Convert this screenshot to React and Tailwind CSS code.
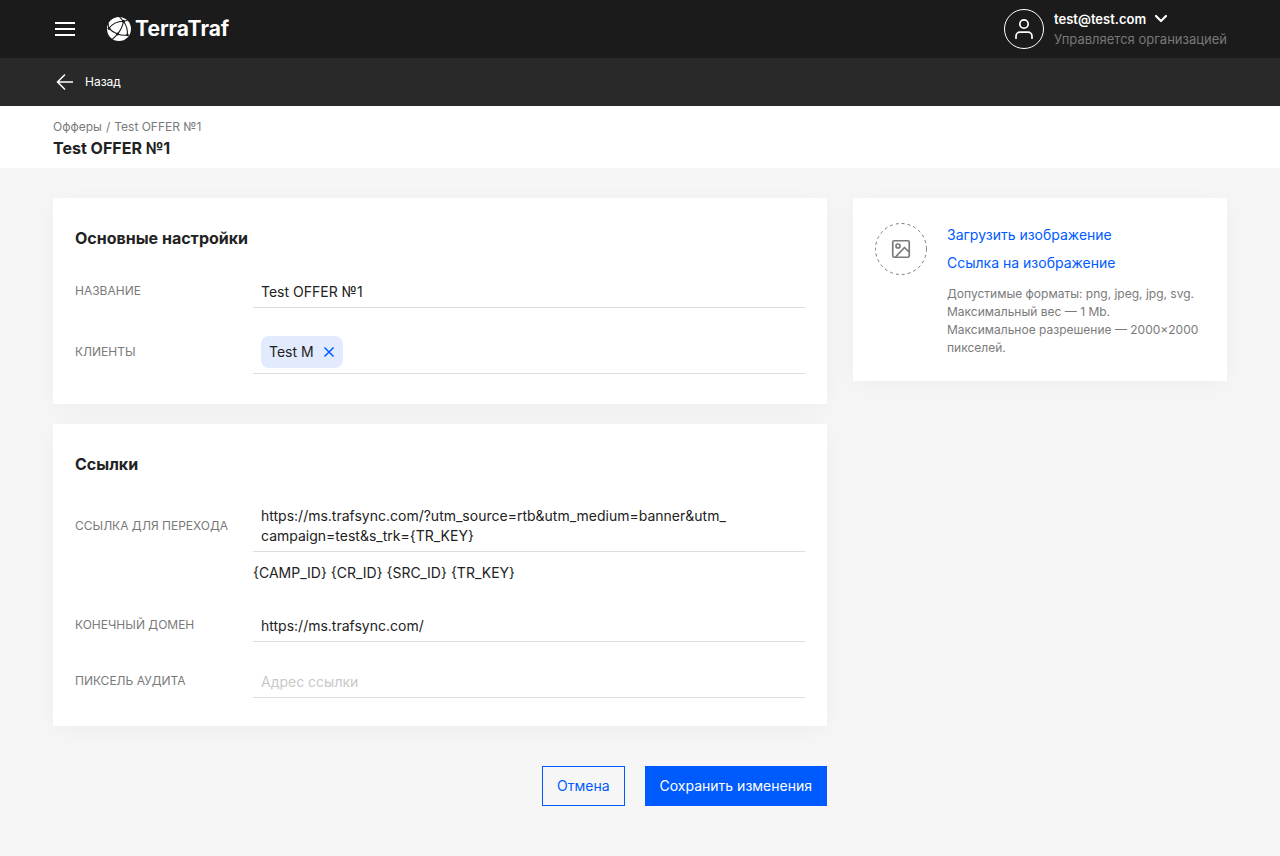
import { useState } from 'react';

const LINK_MACROS = ['{CAMP_ID}', '{CR_ID}', '{SRC_ID}', '{TR_KEY}'];

const DEFAULT_FORM = {
  name: 'Test OFFER №1',
  link: 'https://ms.trafsync.com/?utm_source=rtb&utm_medium=banner&utm_\ncampaign=test&s_trk={TR_KEY}',
  domain: 'https://ms.trafsync.com/',
  pixel: '',
};

const inputClass =
  'block w-full h-8 px-2 pb-px border-b border-[#dedede] bg-transparent text-sm text-[#222222] placeholder:text-[#c8c8c8] outline-none';

function Logo() {
  return (
    <a href="#" className="flex items-center gap-1 text-white">
      <svg width="24" height="24" viewBox="0 0 24 24" aria-hidden="true">
        <circle cx="12" cy="12" r="12" fill="currentColor" />
        <g fill="none" stroke="#1b1b1b" strokeWidth="1.100">
          <path d="M2 11.500C5 7 10 4.400 16.500 4.300" />
          <path d="M2 11.500C4.500 14 7 15.700 10.500 17" />
          <path d="M16.500 4.300C15.500 9.500 13.500 13.500 10.500 17" />
          <path d="M16.500 4.300C19.500 8.500 20.700 13 20.500 18" />
          <path d="M10.500 17C14 18.300 17 18.500 20.500 18" />
          <path d="M10.500 17C9 19 7.500 20.500 5.500 22" />
          <path d="M16.500 4.300L12.500 0" />
          <path d="M16.500 4.300L20.500 3.500" />
          <path d="M2 11.500L1 6" />
        </g>
        <g fill="#1b1b1b">
          <circle cx="16.500" cy="4.300" r="1.500" />
          <circle cx="2" cy="11.500" r="1.400" />
          <circle cx="10.500" cy="17" r="1.500" />
          <circle cx="20.500" cy="18" r="1.300" />
        </g>
      </svg>
      <span className="text-[21px] leading-7 font-bold">TerraTraf</span>
    </a>
  );
}

function Header() {
  return (
    <header className="flex items-center justify-between h-[58px] px-[53px] bg-[#1b1b1b]">
      <div className="flex items-center gap-[30px]">
        <button type="button" aria-label="Меню" className="text-white">
          <svg width="24" height="24" viewBox="0 0 24 24" fill="none" stroke="currentColor" strokeWidth="2">
            <path d="M2 6h20M2 12h20M2 18h20" />
          </svg>
        </button>
        <Logo />
      </div>

      <button type="button" className="flex items-center gap-[10px] text-left">
        <svg width="40" height="40" viewBox="0 0 40 40" fill="none" stroke="#ffffff" aria-hidden="true">
          <circle cx="20" cy="20" r="19.500" />
          <g strokeWidth="1.700" strokeLinecap="round">
            <circle cx="20" cy="15" r="4.200" />
            <path d="M12 29.200v-2a4 4 0 0 1 4-4h8a4 4 0 0 1 4 4v2" />
          </g>
        </svg>
        <span className="block pb-px">
          <span className="flex items-center gap-2 text-[13px] leading-5 font-semibold text-white">
            test@test.com
            <svg width="14" height="9" viewBox="0 0 14 9" fill="none" stroke="currentColor" strokeWidth="2.200" strokeLinecap="round" strokeLinejoin="round">
              <path d="M2 2l5 5 5-5" />
            </svg>
          </span>
          <span className="block text-[13px] leading-5 text-[#787878]">Управляется организацией</span>
        </span>
      </button>
    </header>
  );
}

function Card({ title, className = '', children }) {
  return (
    <section className={`px-[22px] pt-7 bg-white shadow-[0_4px_24px_rgba(0,0,0,0.04)] ${className}`}>
      <h2 className="mb-[26px] text-base leading-6 font-bold text-[#222222]">{title}</h2>
      <div className="flex flex-col gap-6">{children}</div>
    </section>
  );
}

function Field({ id, label, hint, children }) {
  return (
    <div className="grid grid-cols-[178px_minmax(0,1fr)] items-center">
      <label htmlFor={id} className="pb-[3px] text-xs leading-4 uppercase text-[#7a7a7a]">
        {label}
      </label>
      {children}
      {hint && <p className="col-start-2 pt-3 pb-1 text-sm leading-[18px] text-[#222222]">{hint}</p>}
    </div>
  );
}

export default function App() {
  const [form, setForm] = useState(DEFAULT_FORM);
  const [clients, setClients] = useState(['Test M']);

  function update(key) {
    return (e) => setForm({ ...form, [key]: e.target.value });
  }

  return (
    <div className="min-h-screen bg-[#f6f6f6] font-[Inter,sans-serif]">
      <Header />

      <nav className="flex items-center h-12 px-[53px] bg-[#292929]">
        <a href="#" className="flex items-center gap-2 text-xs text-white">
          <svg width="24" height="24" viewBox="0 0 24 24" fill="none" stroke="currentColor" strokeWidth="1.500">
            <path d="M20 12H5M12 4.500L4.500 12l7.500 7.500" />
          </svg>
          Назад
        </a>
      </nav>

      <div className="h-[62px] px-[53px] pt-3 bg-white">
        <div className="flex gap-1 text-xs leading-[18px] text-[#7a7a7a]">
          <a href="#">Офферы</a>
          <span>/</span>
          <span>Test OFFER №1</span>
        </div>
        <h1 className="text-base leading-6 font-bold text-[#222222]">Test OFFER №1</h1>
      </div>

      <main className="grid grid-cols-[minmax(0,1fr)_374px] items-start gap-[26px] px-[53px] pt-[30px] pb-12">
        <form onSubmit={(e) => e.preventDefault()}>
          <div className="flex flex-col gap-5">
            <Card title="Основные настройки" className="pb-[30px]">
              <Field id="name" label="Название">
                <input id="name" type="text" value={form.name} onChange={update('name')} className={inputClass} />
              </Field>
              <Field id="clients" label="Клиенты">
                <div className="flex items-center gap-2 px-2 pt-1 pb-[5px] border-b border-[#dedede]">
                  {clients.map((c) => (
                    <span key={c} className="flex items-center gap-[9px] h-8 px-2 rounded-lg bg-[#e2eafe] text-sm text-[#222222]">
                      {c}
                      <button type="button" aria-label="Удалить" onClick={() => setClients(clients.filter((x) => x !== c))}>
                        <svg width="12" height="12" viewBox="0 0 12 12" fill="none" stroke="#005bff" strokeWidth="1.500">
                          <path d="M1.500 1.500l9 9M10.500 1.500l-9 9" />
                        </svg>
                      </button>
                    </span>
                  ))}
                  <input id="clients" type="text" className="flex-1 min-w-0 h-8 text-sm outline-none" />
                </div>
              </Field>
            </Card>

            <Card title="Ссылки" className="pb-7">
              <Field id="link" label="Ссылка для перехода" hint={LINK_MACROS.join(' ')}>
                <textarea
                  id="link"
                  rows={2}
                  value={form.link}
                  onChange={update('link')}
                  className="block w-full px-2 pt-1 pb-[5px] border-b border-[#dedede] text-sm leading-5 text-[#222222] resize-none outline-none"
                />
              </Field>
              <Field id="domain" label="Конечный домен">
                <input id="domain" type="text" value={form.domain} onChange={update('domain')} className={inputClass} />
              </Field>
              <Field id="pixel" label="Пиксель аудита">
                <input id="pixel" type="text" placeholder="Адрес ссылки" value={form.pixel} onChange={update('pixel')} className={inputClass} />
              </Field>
            </Card>
          </div>

          <div className="flex justify-end gap-5 mt-10">
            <button type="button" className="h-10 px-[14px] border border-[#005bff] text-sm text-[#005bff]">
              Отмена
            </button>
            <button type="submit" className="h-10 px-[15px] bg-[#005bff] text-sm text-white">
              Сохранить изменения
            </button>
          </div>
        </form>

        <aside className="flex items-start gap-5 px-[22px] pt-[25px] pb-6 bg-white shadow-[0_4px_24px_rgba(0,0,0,0.04)]">
          <svg width="52" height="52" viewBox="0 0 52 52" fill="none" stroke="#7a7a7a" className="shrink-0" aria-hidden="true">
            <circle cx="26" cy="26" r="25.500" strokeDasharray="3 3" />
            <g strokeWidth="1.700" strokeLinejoin="round">
              <rect x="17.750" y="17.750" width="16.500" height="16.500" rx="1.500" />
              <circle cx="23" cy="23" r="2" />
              <path d="M20.500 34l9-9.500 4.500 4.500" />
            </g>
          </svg>
          <div className="flex flex-col items-start">
            <button type="button" className="mb-1 text-sm leading-6 text-[#005bff]">Загрузить изображение</button>
            <button type="button" className="mb-[10px] text-sm leading-6 text-[#005bff]">Ссылка на изображение</button>
            <p className="text-xs leading-[18px] text-[#7a7a7a]">
              Допустимые форматы: png, jpeg, jpg, svg.
              <br />
              Максимальный вес — 1 Mb.
              <br />
              Максимальное разрешение — 2000×2000 пикселей.
            </p>
          </div>
        </aside>
      </main>
    </div>
  );
}
